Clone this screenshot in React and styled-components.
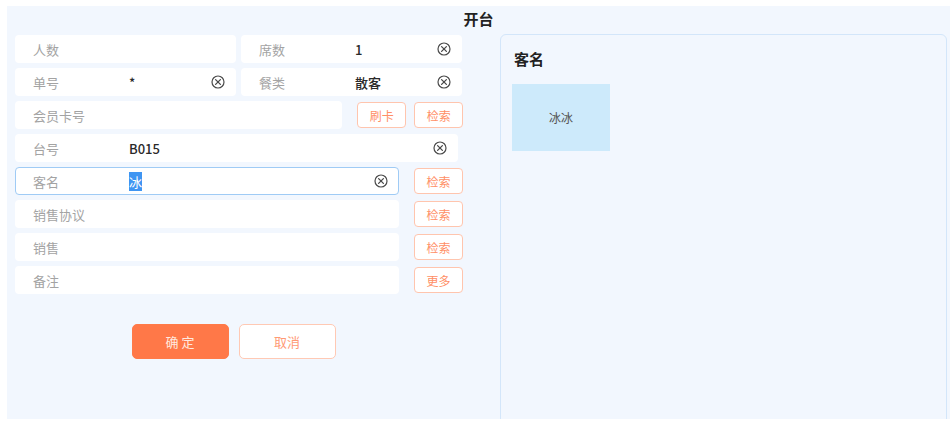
import React from "react";
import styled, { createGlobalStyle } from "styled-components";

const GlobalStyle = createGlobalStyle`
  body {
    margin: 0;
    background: #ffffff;
    font-family: "Noto Sans CJK SC", "Noto Sans", sans-serif;
  }
`;

const ClearIcon = () => (
  <svg width="14" height="14" viewBox="0 0 14 14">
    <circle cx="7" cy="7" r="6" fill="none" stroke="#4a4a4a" strokeWidth="1.2" />
    <path d="M4.6 4.6 L9.4 9.4 M9.4 4.6 L4.6 9.4" stroke="#4a4a4a" strokeWidth="1.3" strokeLinecap="round" />
  </svg>
);

const Field = ({ label, value, clear, width, focused, selected }) => (
  <FieldBox $width={width} $focused={focused}>
    <Label>{label}</Label>
    <Value>{selected ? <Selected>{value}</Selected> : value}</Value>
    {clear && <ClearIcon />}
  </FieldBox>
);

const App = () => {
  return (
    <>
      <GlobalStyle />
      <Panel>
        <Title>开台</Title>
        <Body>
          <Form>
            <Row>
              <Field label="人数" width={221} />
              <Field label="席数" value="1" clear width={221} />
            </Row>
            <Row>
              <Field label="单号" value="*" clear width={221} />
              <Field label="餐类" value="散客" clear width={221} />
            </Row>
            <Row>
              <Field label="会员卡号" width={329} />
              <SmallButton style={{ marginLeft: 10 }}>刷卡</SmallButton>
              <SmallButton>检索</SmallButton>
            </Row>
            <Row>
              <Field label="台号" value="B015" clear width={443} />
            </Row>
            <Row>
              <Field label="客名" value="冰" clear width={384} focused selected />
              <SmallButton style={{ marginLeft: 10 }}>检索</SmallButton>
            </Row>
            <Row>
              <Field label="销售协议" width={384} />
              <SmallButton style={{ marginLeft: 10 }}>检索</SmallButton>
            </Row>
            <Row>
              <Field label="销售" width={384} />
              <SmallButton style={{ marginLeft: 10 }}>检索</SmallButton>
            </Row>
            <Row>
              <Field label="备注" width={384} />
              <SmallButton style={{ marginLeft: 10 }}>更多</SmallButton>
            </Row>
            <Actions>
              <MainButton $primary>确 定</MainButton>
              <MainButton>取消</MainButton>
            </Actions>
          </Form>
          <Side>
            <SideTitle>客名</SideTitle>
            <Tile>冰冰</Tile>
          </Side>
        </Body>
      </Panel>
    </>
  );
};

const Panel = styled.div`
  margin: 6px 0 0 7px;
  width: 943px;
  height: 413px;
  background: #f2f7fe;
  overflow: hidden;
`;

const Title = styled.div`
  height: 28px;
  line-height: 26px;
  text-align: center;
  font-size: 15px;
  font-weight: 700;
  color: #222;
`;

const Body = styled.div`
  display: flex;
  padding-left: 8px;
`;

const Form = styled.div`
  width: 448px;
  display: flex;
  flex-direction: column;
  gap: 5px;
  padding-top: 1px;
`;

const Row = styled.div`
  display: flex;
  align-items: center;
  gap: 5px;
  height: 28px;
`;

const FieldBox = styled.div`
  box-sizing: border-box;
  width: ${(p) => p.$width}px;
  height: 28px;
  display: flex;
  align-items: center;
  padding: 0 10px 0 17px;
  background: #ffffff;
  border-radius: 4px;
  border: 1px solid ${(p) => (p.$focused ? "#9fcbf5" : "transparent")};
`;

const Label = styled.span`
  width: 96px;
  flex-shrink: 0;
  font-size: 13px;
  color: #a3a3a3;
`;

const Value = styled.span`
  flex: 1;
  font-size: 13px;
  font-weight: 500;
  color: #2a2a2a;
`;

const Selected = styled.span`
  background: #3f95f2;
  color: #ffffff;
  font-weight: 400;
`;

const SmallButton = styled.button`
  box-sizing: border-box;
  width: 49px;
  height: 26px;
  margin-left: 3px;
  padding: 0;
  border: 1px solid #ffc5ae;
  border-radius: 4px;
  background: #ffffff;
  color: #ff8f66;
  font-family: inherit;
  font-size: 12px;
`;

const Actions = styled.div`
  display: flex;
  justify-content: center;
  gap: 10px;
  margin-top: 25px;
  padding-right: 11px;
`;

const MainButton = styled.button`
  box-sizing: border-box;
  width: 97px;
  height: 35px;
  padding: 0;
  border-radius: 5px;
  border: 1px solid ${(p) => (p.$primary ? "#ff7a48" : "#ffc9b4")};
  background: ${(p) => (p.$primary ? "#ff7848" : "#ffffff")};
  color: ${(p) => (p.$primary ? "#ffe9df" : "#ff9a76")};
  font-family: inherit;
  font-size: 13px;
`;

const Side = styled.div`
  box-sizing: border-box;
  margin-left: 37px;
  width: 447px;
  height: 420px;
  border: 1px solid #d3e6fa;
  border-radius: 6px;
  padding: 12px 11px;
`;

const SideTitle = styled.div`
  font-size: 15px;
  font-weight: 700;
  color: #222;
  margin-left: 2px;
  line-height: 24px;
`;

const Tile = styled.div`
  margin-top: 13px;
  width: 98px;
  height: 67px;
  background: #cdeafb;
  display: flex;
  align-items: center;
  justify-content: center;
  font-size: 12px;
  color: #555;
`;

export default App;
